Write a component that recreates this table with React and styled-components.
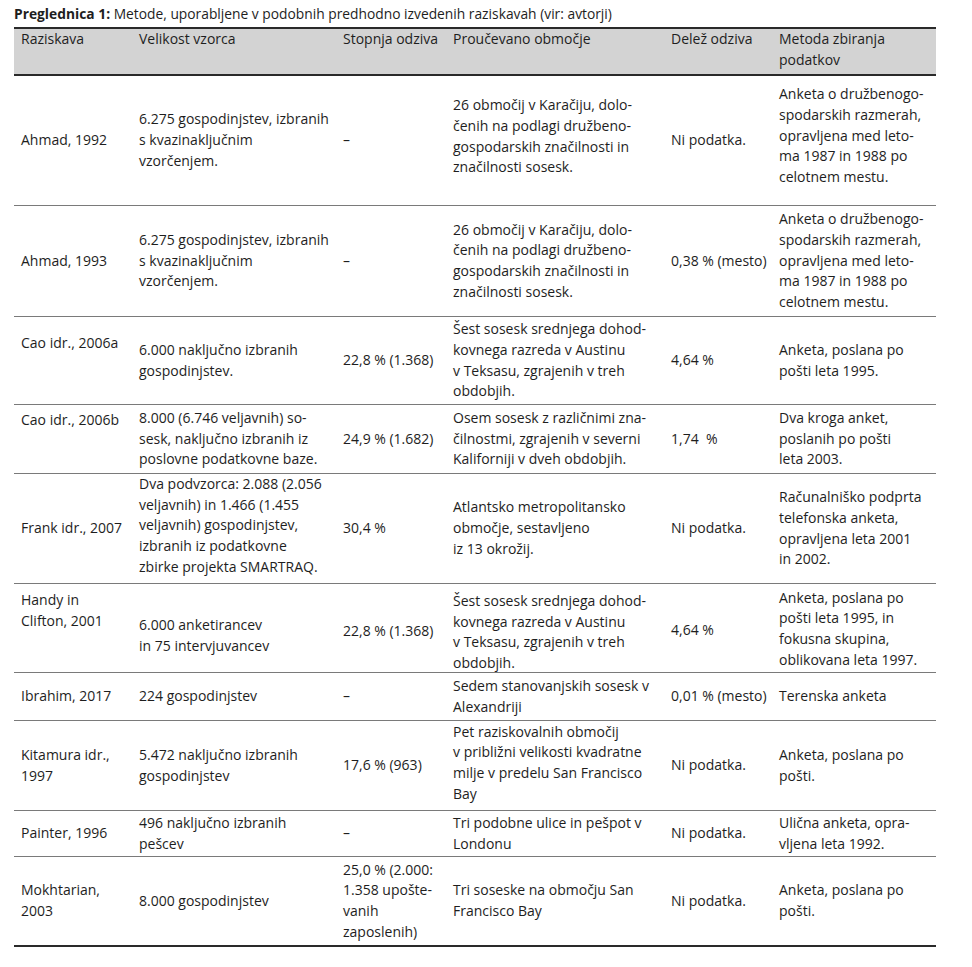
import React from "react";
import styled, { createGlobalStyle } from "styled-components";

const GlobalStyle = createGlobalStyle`
  html, body { margin: 0; padding: 0; background: #ffffff; }
  body { font-family: "Open Sans", "Noto Sans", sans-serif; color: #1e1e1e; }
`;

const COLS = "118px 204px 110px 218px 108px 164px";

const Page = styled.div`
  padding: 4px 0 0 14px;
  width: 922px;
`;

const Caption = styled.div`
  height: 23px;
  font-size: 13.8px;
  line-height: 20.7px;
  white-space: nowrap;
  color: #1e1e1e;
`;

const CaptionLabel = styled.span`
  font-weight: 700;
`;

const Table = styled.div`
  display: flex;
  flex-direction: column;
  width: 922px;
`;

const HeaderRow = styled.div`
  display: grid;
  grid-template-columns: ${COLS};
  box-sizing: border-box;
  height: 49px;
  background: #d3d3d3;
  border-top: 2px solid #2a2a2a;
  border-bottom: 2px solid #2a2a2a;
`;

const Row = styled.div`
  display: grid;
  grid-template-columns: ${COLS};
  box-sizing: border-box;
  height: ${(p) => p.$h}px;
  border-bottom: ${(p) => (p.$last ? "2px solid #2a2a2a" : "1px solid #7a7a7a")};
`;

const Cell = styled.div`
  display: flex;
  flex-direction: column;
  justify-content: ${(p) => (p.$top !== undefined ? "flex-start" : "center")};
  box-sizing: border-box;
  padding-left: 7px;
  padding-right: 3px;
  padding-top: ${(p) =>
    p.$top !== undefined ? p.$top : p.$dy > 0 ? p.$dy : 0}px;
  padding-bottom: ${(p) => (p.$top === undefined && p.$dy < 0 ? -p.$dy : 0)}px;
  font-size: 14px;
  line-height: 20.7px;
  color: #1e1e1e;
`;

const Line = styled.span`
  display: block;
  white-space: pre;
`;

const header = [
  ["Raziskava"],
  ["Velikost vzorca"],
  ["Stopnja odziva"],
  ["Proučevano območje"],
  ["Delež odziva"],
  ["Metoda zbiranja", "podatkov"],
];

const c = (lines, opts = {}) => ({ lines, ...opts });

const sestSosesk = [
  "Šest sosesk srednjega dohod-",
  "kovnega razreda v Austinu",
  "v Teksasu, zgrajenih v treh",
  "obdobjih.",
];

const ahmadSample = ["6.275 gospodinjstev, izbranih", "s kvazinaključnim", "vzorčenjem."];
const karaci = [
  "26 območij v Karačiju, dolo-",
  "čenih na podlagi družbeno-",
  "gospodarskih značilnosti in",
  "značilnosti sosesk.",
];
const ahmadMethod = [
  "Anketa o družbenogo-",
  "spodarskih razmerah,",
  "opravljena med leto-",
  "ma 1987 in 1988 po",
  "celotnem mestu.",
];

const rows = [
  {
    h: 130,
    cells: [
      c(["Ahmad, 1992"]),
      c(ahmadSample),
      c(["–"]),
      c(karaci, { dy: -8 }),
      c(["Ni podatka."]),
      c(ahmadMethod, { dy: -9 }),
    ],
  },
  {
    h: 111,
    cells: [
      c(["Ahmad, 1993"]),
      c(ahmadSample),
      c(["–"]),
      c(karaci),
      c(["0,38 % (mesto)"]),
      c(ahmadMethod),
    ],
  },
  {
    h: 88,
    cells: [
      c(["Cao idr., 2006a"], { top: 16 }),
      c(["6.000 naključno izbranih", "gospodinjstev."]),
      c(["22,8 % (1.368)"]),
      c(sestSosesk),
      c(["4,64 %"]),
      c(["Anketa, poslana po", "pošti leta 1995."]),
    ],
  },
  {
    h: 69,
    cells: [
      c(["Cao idr., 2006b"], { top: 5 }),
      c(["8.000 (6.746 veljavnih) so-", "sesk, naključno izbranih iz", "poslovne podatkovne baze."]),
      c(["24,9 % (1.682)"]),
      c(["Osem sosesk z različnimi zna-", "čilnostmi, zgrajenih v severni", "Kaliforniji v dveh obdobjih."]),
      c(["1,74  %"]),
      c(["Dva kroga anket,", "poslanih po pošti", "leta 2003."]),
    ],
  },
  {
    h: 110,
    cells: [
      c(["Frank idr., 2007"]),
      c(
        [
          "Dva podvzorca: 2.088 (2.056",
          "veljavnih) in 1.466 (1.455",
          "veljavnih) gospodinjstev,",
          "izbranih iz podatkovne",
          "zbirke projekta SMARTRAQ.",
        ],
        { top: 0 }
      ),
      c(["30,4 %"]),
      c(["Atlantsko metropolitansko", "območje, sestavljeno", "iz 13 okrožij."]),
      c(["Ni podatka."]),
      c(["Računalniško podprta", "telefonska anketa,", "opravljena leta 2001", "in 2002."]),
    ],
  },
  {
    h: 89,
    cells: [
      c(["Handy in", "Clifton, 2001"], { top: 6 }),
      c(["6.000 anketirancev", "in 75 intervjuvancev"], { top: 31 }),
      c(["22,8 % (1.368)"], { dy: 4 }),
      c(sestSosesk, { dy: 7 }),
      c(["4,64 %"], { dy: 3 }),
      c(["Anketa, poslana po", "pošti leta 1995, in", "fokusna skupina,", "oblikovana leta 1997."]),
    ],
  },
  {
    h: 48,
    cells: [
      c(["Ibrahim, 2017"]),
      c(["224 gospodinjstev"]),
      c(["–"]),
      c(["Sedem stanovanjskih sosesk v", "Alexandriji"]),
      c(["0,01 % (mesto)"]),
      c(["Terenska anketa"]),
    ],
  },
  {
    h: 90,
    cells: [
      c(["Kitamura idr.,", "1997"]),
      c(["5.472 naključno izbranih", "gospodinjstev"]),
      c(["17,6 % (963)"]),
      c(
        [
          "Pet raziskovalnih območij",
          "v približni velikosti kvadratne",
          "milje v predelu San Francisco",
          "Bay",
        ],
        { dy: -5 }
      ),
      c(["Ni podatka."]),
      c(["Anketa, poslana po", "pošti."]),
    ],
  },
  {
    h: 46,
    cells: [
      c(["Painter, 1996"]),
      c(["496 naključno izbranih", "pešcev"]),
      c(["–"]),
      c(["Tri podobne ulice in pešpot v", "Londonu"]),
      c(["Ni podatka."]),
      c(["Ulična anketa, opra-", "vljena leta 1992."]),
    ],
  },
  {
    h: 90,
    last: true,
    cells: [
      c(["Mokhtarian,", "2003"]),
      c(["8.000 gospodinjstev"]),
      c(["25,0 % (2.000:", "1.358 upošte-", "vanih", "zaposlenih)"]),
      c(["Tri soseske na območju San", "Francisco Bay"]),
      c(["Ni podatka."]),
      c(["Anketa, poslana po", "pošti."]),
    ],
  },
];

export default function App() {
  return (
    <>
      <GlobalStyle />
      <Page>
        <Caption>
          <CaptionLabel>Preglednica 1:</CaptionLabel> Metode, uporabljene v podobnih
          predhodno izvedenih raziskavah (vir: avtorji)
        </Caption>
        <Table>
          <HeaderRow>
            {header.map((lines, i) => (
              <Cell key={i} $top={0}>
                {lines.map((t, j) => (
                  <Line key={j}>{t}</Line>
                ))}
              </Cell>
            ))}
          </HeaderRow>
          {rows.map((r, i) => (
            <Row key={i} $h={r.h} $last={r.last}>
              {r.cells.map((cell, j) => (
                <Cell key={j} $top={cell.top} $dy={cell.dy || 0}>
                  {cell.lines.map((t, k) => (
                    <Line key={k}>{t}</Line>
                  ))}
                </Cell>
              ))}
            </Row>
          ))}
        </Table>
      </Page>
    </>
  );
}
